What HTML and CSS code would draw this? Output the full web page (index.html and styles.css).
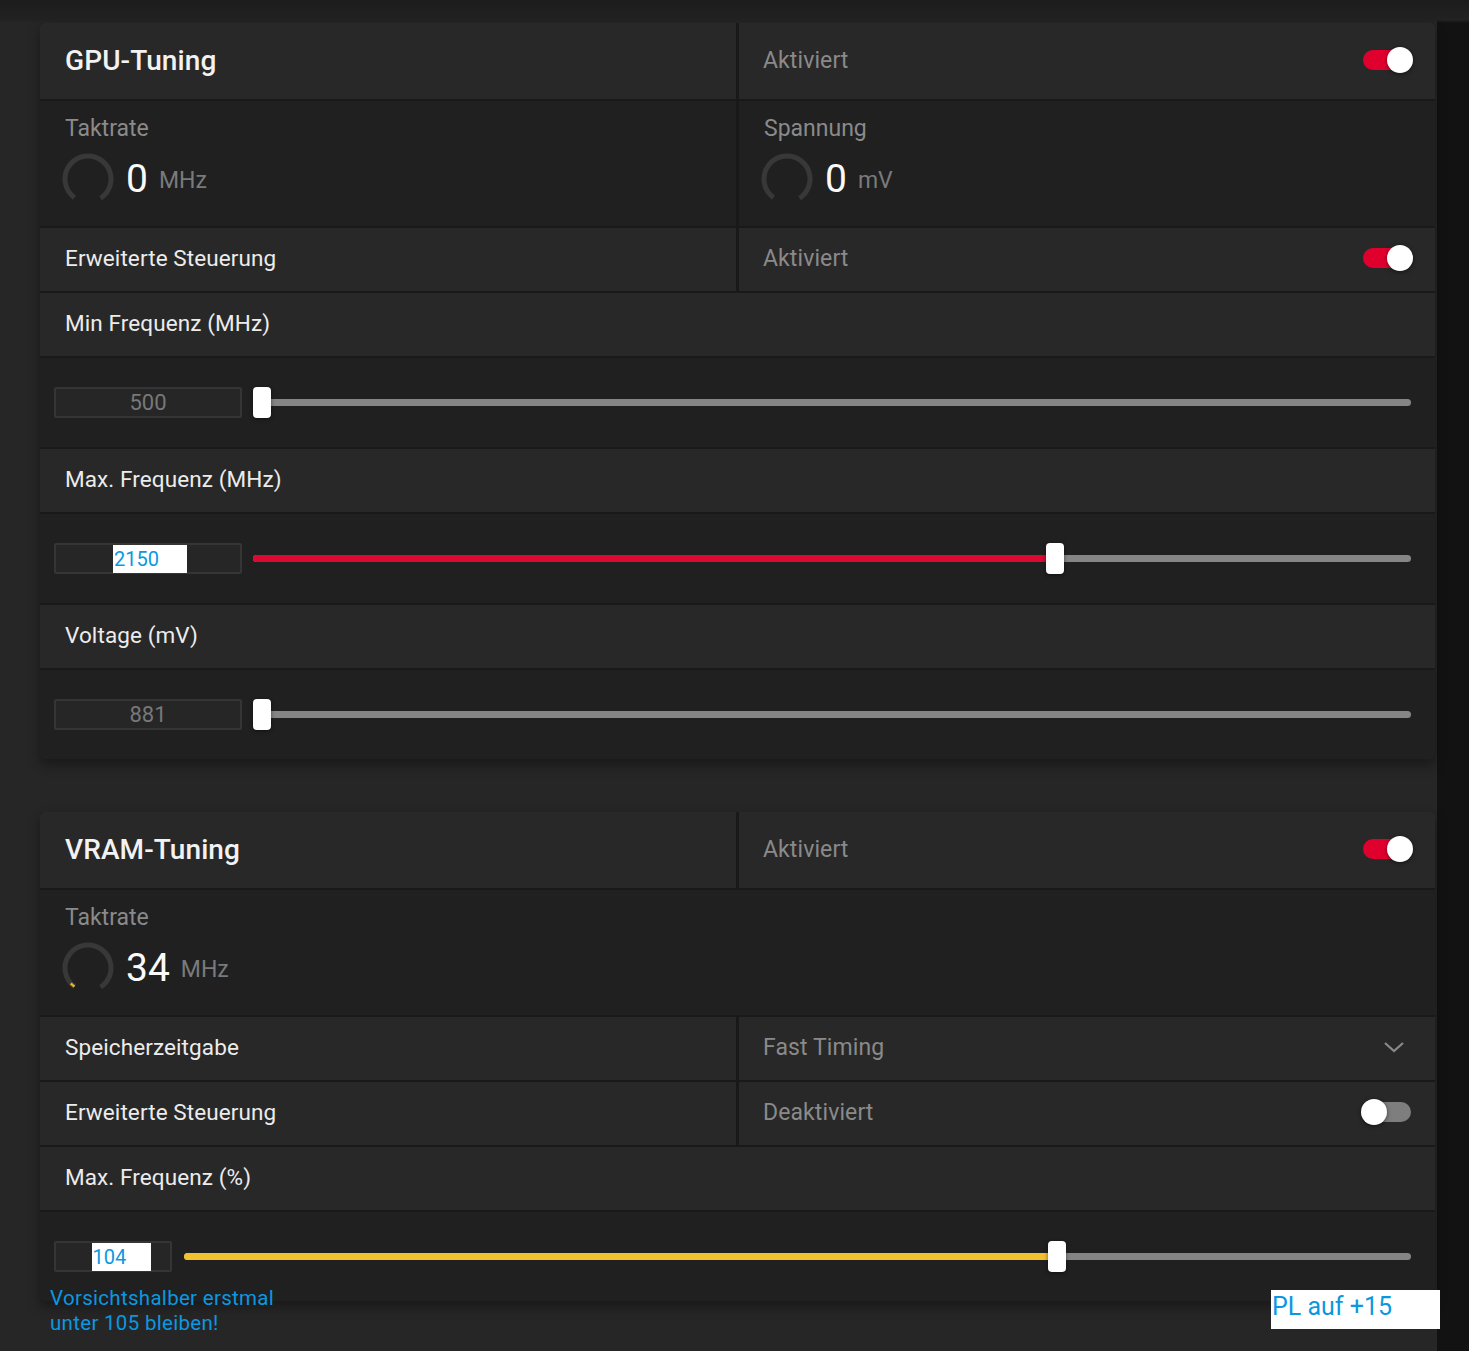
FILE: index.html
```html
<!DOCTYPE html>
<html lang="de">
<head>
<meta charset="utf-8">
<title>GPU-Tuning</title>
<link rel="stylesheet" href="styles.css">
</head>
<body>
<div class="page">
  <section class="panel">
    <div class="row split head">
      <div class="cell"><h2 class="title">GPU-Tuning</h2></div>
      <div class="cell right"><span class="muted">Aktiviert</span><span class="toggle on"><span class="knob"></span></span></div>
    </div>
    <div class="row split stat">
      <div class="cell statcell">
        <div class="stat-label">Taktrate</div>
        <div class="stat-line">
          <svg class="gauge" viewBox="0 0 52 52" width="52" height="52"><circle cx="26" cy="26" r="23" fill="none" stroke="#383838" stroke-width="5" stroke-dasharray="116 200" transform="rotate(126 26 26)"/></svg>
          <span class="big">0</span><span class="unit">MHz</span>
        </div>
      </div>
      <div class="cell statcell">
        <div class="stat-label">Spannung</div>
        <div class="stat-line">
          <svg class="gauge" viewBox="0 0 52 52" width="52" height="52"><circle cx="26" cy="26" r="23" fill="none" stroke="#383838" stroke-width="5" stroke-dasharray="116 200" transform="rotate(126 26 26)"/></svg>
          <span class="big">0</span><span class="unit">mV</span>
        </div>
      </div>
    </div>
    <div class="row split line">
      <div class="cell"><span class="label">Erweiterte Steuerung</span></div>
      <div class="cell right"><span class="muted">Aktiviert</span><span class="toggle on"><span class="knob"></span></span></div>
    </div>
    <div class="row line full"><span class="label">Min Frequenz (MHz)</span></div>
    <div class="row slider-row">
      <div class="num wide"><span class="numtext">500</span></div>
      <div class="track"><div class="rail"></div><div class="thumb" style="left:0%"></div></div>
    </div>
    <div class="row line full"><span class="label">Max. Frequenz (MHz)</span></div>
    <div class="row slider-row">
      <div class="num wide"><span class="sel sel-wide">2150</span></div>
      <div class="track"><div class="rail"></div><div class="fill red" style="width:68.8%"></div><div class="thumb" style="left:68.5%"></div></div>
    </div>
    <div class="row line full"><span class="label">Voltage (mV)</span></div>
    <div class="row slider-row">
      <div class="num wide"><span class="numtext">881</span></div>
      <div class="track"><div class="rail"></div><div class="thumb" style="left:0%"></div></div>
    </div>
  </section>

  <section class="panel second">
    <div class="row split head">
      <div class="cell"><h2 class="title">VRAM-Tuning</h2></div>
      <div class="cell right"><span class="muted">Aktiviert</span><span class="toggle on"><span class="knob"></span></span></div>
    </div>
    <div class="row stat full-stat">
      <div class="cell statcell">
        <div class="stat-label">Taktrate</div>
        <div class="stat-line">
          <svg class="gauge" viewBox="0 0 52 52" width="52" height="52"><circle cx="26" cy="26" r="23" fill="none" stroke="#383838" stroke-width="5" stroke-dasharray="116 200" transform="rotate(126 26 26)"/><circle cx="26" cy="26" r="23" fill="none" stroke="#e8b420" stroke-width="2.5" stroke-dasharray="5 200" transform="rotate(126 26 26)"/></svg>
          <span class="big">34</span><span class="unit">MHz</span>
        </div>
      </div>
    </div>
    <div class="row split line">
      <div class="cell"><span class="label">Speicherzeitgabe</span></div>
      <div class="cell right"><span class="muted">Fast Timing</span><svg class="chev" viewBox="0 0 22 12" width="22" height="12"><path d="M2 2 L11 10 L20 2" fill="none" stroke="#8a8a8a" stroke-width="2.2"/></svg></div>
    </div>
    <div class="row split line">
      <div class="cell"><span class="label">Erweiterte Steuerung</span></div>
      <div class="cell right"><span class="muted">Deaktiviert</span><span class="toggle off"><span class="knob"></span></span></div>
    </div>
    <div class="row line full"><span class="label">Max. Frequenz (%)</span></div>
    <div class="row slider-row">
      <div class="num narrow"><span class="sel sel-narrow">104</span></div>
      <div class="track narrow-gap"><div class="rail"></div><div class="fill yellow" style="width:70.6%"></div><div class="thumb" style="left:70.4%"></div></div>
    </div>
  </section>

  <p class="note">Vorsichtshalber erstmal<br>unter 105 bleiben!</p>
  <p class="pl">PL auf +15</p>
</div>
</body>
</html>
```

FILE: styles.css
```css
* { box-sizing: border-box; }
html, body { margin: 0; padding: 0; }
body {
  width: 1469px;
  height: 1351px;
  overflow: hidden;
  background: linear-gradient(to right, #262626 0, #262626 1437px, #121212 1437px);
  font-family: Roboto, "Noto Sans", "Liberation Sans", sans-serif;
  color: #e8e8e8;
}
.page {
  position: relative;
  height: 1351px;
  padding: 23px 0 0 40px;
  background: linear-gradient(to bottom, #1c1c1c 0, #222 20px, transparent 23px);
}
.panel {
  width: 1395px;
  display: flex;
  flex-direction: column;
  gap: 2px;
  background: #191919;
  border-radius: 4px;
  overflow: hidden;
  box-shadow: 0 6px 12px rgba(0,0,0,0.35);
}
.panel.second { margin-top: 53px; }
.row { display: flex; }
.split { display: grid; grid-template-columns: 1fr 1fr; gap: 3px; background: #191919; }
.cell { display: flex; align-items: center; padding: 0 24px 3px 25px; background: #282828; }
.cell.right { justify-content: space-between; padding-left: 24px; }
.head { height: 76px; }
.head .cell { background: #282828; padding-bottom: 2px; }
.line { height: 63px; }
.full { background: #282828; align-items: center; padding-left: 25px; padding-bottom: 3px; }
.stat { height: 125px; }
.stat .cell { background: #202020; }
.full-stat .cell { flex: 1; }
.statcell { flex-direction: column; align-items: flex-start; justify-content: flex-start; padding-top: 14px; }
.slider-row { height: 89px; background: #202020; align-items: center; padding: 0 24px 0 14px; }

.title { margin: 0; font-size: 28px; font-weight: 500; color: #f2f2f2; letter-spacing: 0.1px; }
.label { font-size: 22.5px; color: #ececec; letter-spacing: 0.1px; }
.muted { font-size: 23px; color: #8a8a8a; letter-spacing: 0.1px; }
.stat-label { font-size: 23px; color: #8a8a8a; line-height: 28px; }
.stat-line { display: flex; align-items: center; margin-top: 10px; margin-left: -3px; }
.gauge { display: block; }
.big { font-size: 39px; color: #fafafa; margin-left: 12px; line-height: 44px; }
.unit { font-size: 23px; color: #7a7a7a; margin-left: 11px; margin-top: 2px; }

.toggle { position: relative; width: 48px; height: 20px; border-radius: 10px; }
.toggle.on { background: #e0002e; }
.toggle.off { background: #7e7e7e; }
.knob { position: absolute; top: -3px; width: 26px; height: 26px; border-radius: 50%; background: #fff; box-shadow: 0 1px 4px rgba(0,0,0,0.5); }
.toggle.on .knob { right: -2px; }
.toggle.off .knob { left: -2px; }
.chev { margin-right: 6px; }

.num {
  height: 31px;
  border: 2px solid #353535;
  background: #262626;
  border-radius: 2px;
  display: flex;
  align-items: center;
  justify-content: center;
  flex: none;
}
.num.wide { width: 188px; }
.num.narrow { width: 118px; }
.numtext { font-size: 22px; color: #787878; }
.sel { background: #fff; color: #0a98e0; font-size: 20px; height: 28px; line-height: 28px; padding-left: 1px; }
.sel-wide { width: 74px; margin-left: 4px; }
.sel-narrow { width: 59px; margin-left: 16px; }

.track { position: relative; flex: 1; height: 31px; margin-left: 11px; }
.track.narrow-gap { margin-left: 12px; }
.rail { position: absolute; left: 0; right: 0; top: 12px; height: 7px; border-radius: 4px; background: #858585; }
.fill { position: absolute; left: 0; top: 12px; height: 7px; border-radius: 4px; }
.fill.red { background: #dc0a32; }
.fill.yellow { background: #f2c12e; }
.thumb { position: absolute; top: 0; width: 18px; height: 31px; border-radius: 4px; background: #fff; box-shadow: 0 1px 4px rgba(0,0,0,0.5); }

.note {
  position: absolute;
  left: 50px;
  top: 1286px;
  margin: 0;
  font-size: 20.5px;
  line-height: 25px;
  color: #0a98e0;
  letter-spacing: 0.3px;
}
.pl {
  position: absolute;
  left: 1271px;
  top: 1290px;
  width: 169px;
  height: 39px;
  margin: 0;
  padding-left: 1px;
  background: #fff;
  color: #0a98e0;
  font-size: 25px;
  line-height: 34px;
}
```
